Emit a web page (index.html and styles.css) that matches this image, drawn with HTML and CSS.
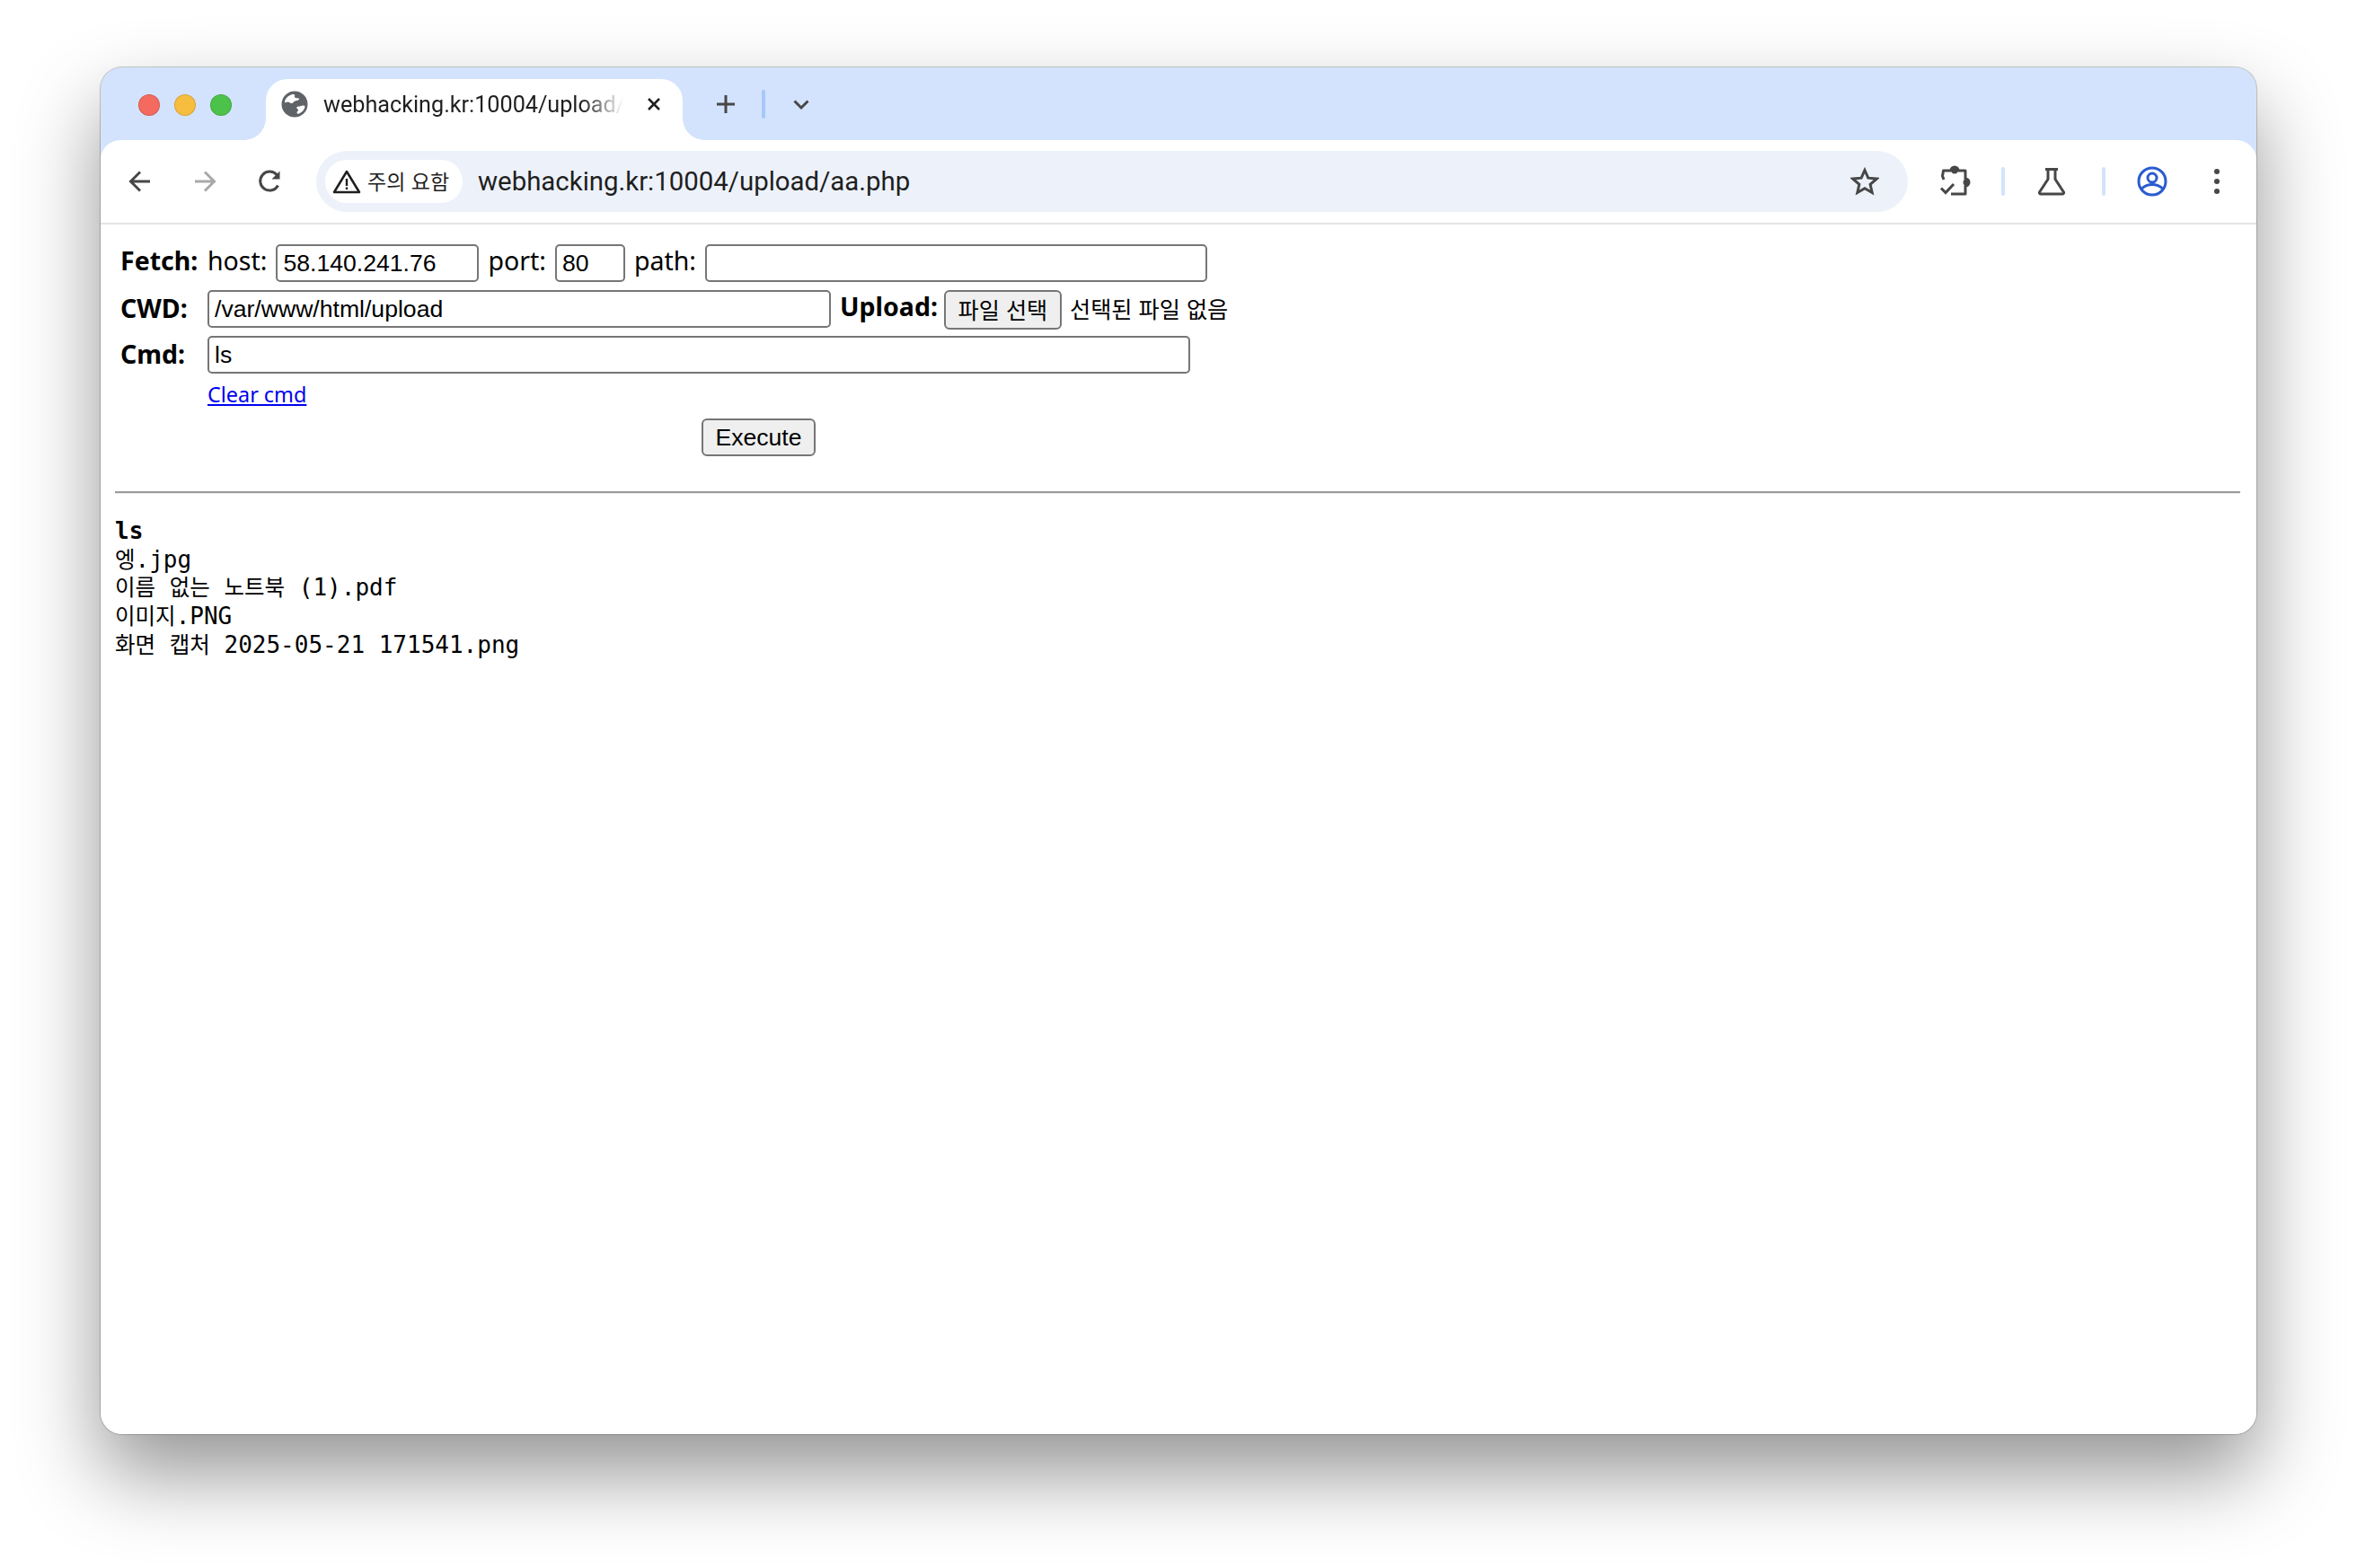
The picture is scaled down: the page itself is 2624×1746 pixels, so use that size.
FILE: index.html
```html
<!DOCTYPE html>
<html lang="ko">
<head>
<meta charset="utf-8">
<title>webhacking.kr:10004/upload/aa.php</title>
<link rel="stylesheet" href="styles.css">
</head>
<body>
<div class="window">
  <div class="tabbar">
    <div class="lights"><i class="light red"></i><i class="light amber"></i><i class="light green"></i></div>
    <div class="tab">
      <svg class="globe" width="30" height="30" viewBox="0 0 30 30"><circle cx="15" cy="15" r="14.5" fill="#5f6368"/><path d="M9 5.500c2-1.500 5-2 6-1 .8 1-1 2 .5 3.200 1.800 1.300 4 0 4.500 1.300.3 1.500-2.500 2-4.500 2.500-2.200.6-2 2.700-4 2.500-1.800-.2-2.500-2-4.500-1.500-1 .3-2.500 1-3 .5C4 9.500 6.500 7 9 5.500ZM24 16.500c1.500-.3 2.500.5 2.500 1.500-.5 2.500-3 6-6.500 7.500-1.500.5-2.500 0-2.500-1 0-1.500 1.500-1.500 1.500-3 0-1-1.800-1.300-1.800-2.500 0-1.500 2-1.500 3.300-1.500 1.300 0 2-1 3.500-1Z" fill="#fff"/></svg>
      <span class="tab-title">webhacking.kr:10004/upload/aa.php</span>
      <svg class="tab-close" width="16" height="16" viewBox="0 0 16 16"><path d="M2 2l12 12M14 2L2 14" stroke="#1f1f1f" stroke-width="2.500" fill="none"/></svg>
    </div>
    <svg class="new-tab" width="40" height="40" viewBox="0 0 40 40"><path d="M20 10v20M10 20h20" stroke="#474747" stroke-width="3" fill="none"/></svg>
    <i class="sep sep-tab"></i>
    <svg class="tab-menu" width="40" height="40" viewBox="0 0 40 40"><path d="M12.500 16.500l7.500 7.500 7.500-7.500" stroke="#474747" stroke-width="3" fill="none"/></svg>
  </div>
  <div class="toolbar">
    <svg class="tool nav" width="48" height="48" viewBox="0 0 48 48"><path d="M35 24H14M24 13.500L13.500 24 24 34.500" stroke="#474747" stroke-width="3" fill="none"/></svg>
    <svg class="tool nav" width="48" height="48" viewBox="0 0 48 48"><path d="M13 24h21M24 13.500L34.500 24 24 34.500" stroke="#a9a9a9" stroke-width="3" fill="none"/></svg>
    <svg class="tool nav" width="48" height="48" viewBox="0 0 48 48"><path d="M33.500 28.500A10.500 10.500 0 1 1 32 16.500L34 19" stroke="#474747" stroke-width="3" fill="none"/><path d="M35.500 12.500V21.500H26.500Z" fill="#474747"/></svg>
    <div class="omnibox">
      <div class="chip">
        <svg width="32" height="28" viewBox="0 0 32 28"><path d="M16 3L30 26H2Z" stroke="#1f1f1f" stroke-width="2.500" fill="none" stroke-linejoin="round"/><path d="M16 11v8M16 20.500v2.500" stroke="#1f1f1f" stroke-width="2.400" fill="none"/></svg>
        <span class="chip-text">주의 요함</span>
      </div>
      <span class="url">webhacking.kr:10004/upload/aa.php</span>
      <svg class="star" width="32" height="32" viewBox="0 0 32 32"><path d="M16 3.500l3.800 8.700 9.400.9-7.100 6.200 2.100 9.200L16 23.700l-8.200 4.800 2.100-9.200-7.100-6.200 9.400-.9Z" stroke="#474747" stroke-width="3" fill="none" stroke-linejoin="miter"/></svg>
    </div>
    <svg class="tool ext" width="48" height="48" viewBox="0 0 48 48"><path d="M12 22l-1.500-4 1-6H20a4 4 0 0 1 8 0h8v9a4 4 0 0 1 0 8v9H20" stroke="#474747" stroke-width="3" fill="none" stroke-linejoin="round"/><path d="M9 31.500l5 5L23 27" stroke="#474747" stroke-width="3" fill="none"/><circle cx="24" cy="12" r="3.500" fill="#474747"/><circle cx="37" cy="25" r="3.500" fill="#474747"/></svg>
    <i class="sep sep-one"></i>
    <svg class="tool flask" width="48" height="48" viewBox="0 0 48 48"><path d="M17 10.500h14M20 10.500v11L10.500 36a1.500 1.500 0 0 0 1.500 2h24a1.500 1.500 0 0 0 1.500-2L28 21.500v-11" stroke="#474747" stroke-width="3" fill="none" stroke-linejoin="round"/></svg>
    <i class="sep sep-two"></i>
    <svg class="tool avatar" width="48" height="48" viewBox="0 0 48 48"><circle cx="24" cy="24" r="15" stroke="#2a5bd0" stroke-width="3" fill="none"/><circle cx="24" cy="20" r="5" stroke="#2a5bd0" stroke-width="3" fill="none"/><path d="M12.500 32c3-3 7-4.500 11.500-4.500S32.500 29 35.500 32" stroke="#2a5bd0" stroke-width="3" fill="none"/></svg>
    <svg class="tool dots" width="48" height="48" viewBox="0 0 48 48"><circle cx="24" cy="13" r="3" fill="#474747"/><circle cx="24" cy="24" r="3" fill="#474747"/><circle cx="24" cy="35" r="3" fill="#474747"/></svg>
  </div>
  <main class="page">
    <form class="form">
      <div class="row">
        <b class="label lift">Fetch:</b>
        <span class="text lift">host:</span>
        <input class="field f-host" value="58.140.241.76">
        <span class="text lift">port:</span>
        <input class="field f-port" value="80">
        <span class="text lift">path:</span>
        <input class="field f-path">
      </div>
      <div class="row">
        <b class="label nudge">CWD:</b>
        <input class="field f-cwd" value="/var/www/html/upload">
        <b class="text lift">Upload:</b>
        <button class="btn file-btn" type="button">파일 선택</button>
        <span class="no-file">선택된 파일 없음</span>
      </div>
      <div class="row">
        <b class="label nudge">Cmd:</b>
        <input class="field f-cmd" value="ls">
      </div>
      <div class="row row-link">
        <a class="clear" href="#">Clear cmd</a>
      </div>
      <div class="row row-exec">
        <button class="btn exec" type="button">Execute</button>
      </div>
    </form>
    <hr class="rule">
    <pre class="output"><b>ls</b>
<span class="ko">엥</span>.jpg
<span class="ko">이름</span> <span class="ko">없는</span> <span class="ko">노트북</span> (1).pdf
<span class="ko">이미지</span>.PNG
<span class="ko">화면</span> <span class="ko">캡처</span> 2025-05-21 171541.png</pre>
  </main>
</div>
</body>
</html>
```
FILE: styles.css
```css
* { box-sizing: border-box; }
html, body { margin: 0; background: #fff; }
body { padding: 75px 112px 148px; height: 1746px; overflow: hidden; }

.window {
  height: 1522px;
  background: #d3e3fd;
  border-radius: 24px;
  box-shadow: 0 44px 90px rgba(0,0,0,.42), 0 0 0 1px rgba(0,0,0,.2);
  display: flex;
  flex-direction: column;
  overflow: hidden;
}

.tabbar { height: 81px; flex: none; display: flex; align-items: flex-end; padding-left: 42px; }
.lights { display: flex; gap: 16px; align-self: flex-start; margin-top: 30px; margin-right: 38px; }
.light { width: 24px; height: 24px; border-radius: 50%; border: 1px solid rgba(0,0,0,.13); display: block; }
.red { background: #f46a5e; }
.amber { background: #f7bd3e; }
.green { background: #4cc24a; }

.tab {
  position: relative;
  width: 464px; height: 68px;
  background: #fff;
  border-radius: 24px 24px 0 0;
  display: flex; align-items: center;
  padding: 0 0 12px 17px;
  font: 25.2px "Roboto", sans-serif;
  color: #1f1f1f;
}
.tab::before, .tab::after {
  content: ""; position: absolute; bottom: 0; width: 24px; height: 24px;
}
.tab::before { left: -24px; background: radial-gradient(circle at 0 0, transparent 23.5px, #fff 24px); }
.tab::after { right: -24px; background: radial-gradient(circle at 100% 0, transparent 23.5px, #fff 24px); }
.globe { flex: none; margin-right: 17px; }
.tab-title {
  width: 334px; white-space: nowrap; overflow: hidden; flex: none;
  -webkit-mask-image: linear-gradient(90deg, #000 86%, transparent 100%);
  mask-image: linear-gradient(90deg, #000 86%, transparent 100%);
}
.tab-close { flex: none; margin-left: 26px; }
.new-tab { margin: 0 0 20px 28px; flex: none; }
.sep { display: block; flex: none; width: 4px; border-radius: 2px; }
.sep-tab { height: 32px; margin: 0 0 24px 20px; background: #a8c7fa; }
.tab-menu { margin: 0 0 20px 20px; flex: none; }

.toolbar {
  height: 94px; flex: none;
  background: #fff;
  border-radius: 22px 22px 0 0;
  border-bottom: 2px solid #e3e3e3;
  display: flex; align-items: center;
  padding: 0 20px;
}
.tool { flex: none; display: block; }
.nav + .nav { margin-left: 24px; }
.omnibox {
  flex: 1; height: 68px; margin: 0 28px;
  background: #edf2fa; border-radius: 34px;
  display: flex; align-items: center;
  padding: 0 32px 0 10px;
}
.chip {
  height: 48px; width: 153px; background: #fff; border-radius: 24px; flex: none;
  display: flex; align-items: center; gap: 7px; padding-left: 8px;
  font: 23px "Noto Sans CJK KR", sans-serif; color: #1f1f1f;
}
.chip-text { padding-bottom: 2px; }
.url { flex: 1; margin-left: 17px; font: 29.4px "Roboto", sans-serif; color: #1f1f1f; white-space: nowrap; }
.star { flex: none; }
.sep-one, .sep-two { height: 32px; background: #d3e3fd; }
.sep-one { margin: 0 28px; }
.sep-two { margin: 0 28px 0 32px; }
.dots { margin-left: 24px; }

.page { flex: 1; background: #fff; padding: 22px 18px 0 16px; color: #000; font: 28.5px "Noto Sans", sans-serif; }
.form { display: flex; flex-direction: column; }
.row { display: flex; align-items: center; height: 42px; margin-bottom: 9px; gap: 10px; padding-left: 6px; white-space: nowrap; }
.label { width: 87px; flex: none; }
.lift { margin-bottom: 6px; }
.nudge { margin-bottom: 3px; }
.field {
  height: 42px; flex: none; margin: 0;
  border: 2px solid #767676; border-radius: 5px; background: #fff;
  padding: 2px 6px; font: 26.6px "Liberation Sans", sans-serif; color: #000;
}
.f-host { width: 226px; }
.f-port { width: 78px; }
.f-path { width: 559px; }
.f-cwd { width: 694px; }
.f-cmd { width: 1094px; }
.btn {
  height: 42px; margin: 0;
  border: 2px solid #767676; border-radius: 6px; background: #efefef;
  font: 26.6px "Liberation Sans", "Noto Sans CJK KR", sans-serif; color: #000; padding: 0;
}
.file-btn { width: 131px; height: 44px; font-size: 25.2px; margin: 2px 0 0 -3px; padding-bottom: 3px; }
.no-file { font: 25.2px "Noto Sans CJK KR", sans-serif; margin: 0 0 3px -1px; }
.row-link { height: 32px; margin: -2px 0 11px; padding-left: 103px; }
.clear { color: #0000ee; font: 23.4px "Noto Sans", sans-serif; }
.row-exec { padding-left: 653px; margin-bottom: 0; }
.exec { width: 127px; }
.rule { border: 0; border-top: 2px solid #9a9a9a; border-bottom: 1px solid #eee; margin: 39px 0 0; height: 3px; }
.output { margin: 26px 0 0; font: 26px/31.7px "DejaVu Sans Mono", "Noto Sans CJK KR", monospace; color: #000; }
.ko { font: 24.5px/1 "Noto Sans CJK KR", sans-serif; }
```
